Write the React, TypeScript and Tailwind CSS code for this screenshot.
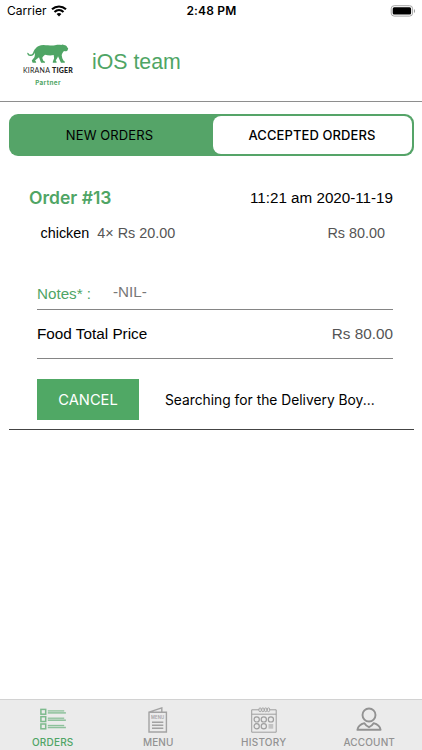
import React, { useState } from 'react';

type IconProps = { className?: string };

const OrdersIcon = ({ className }: IconProps) => (
  <svg viewBox="0 0 26 23" className={className} fill="none" stroke="currentColor">
    {[0, 7.3, 14.6].map((y) => (
      <g key={y} transform={`translate(0 ${y})`}>
        <rect x="0.9" y="1.4" width="4.8" height="4.8" strokeWidth="1.5" opacity="0.7" />
        <path d="M7.8 2.9H24.2" strokeWidth="1.3" opacity="0.6" />
        <path d="M7.8 4.9H25.9" strokeWidth="1.5" opacity="0.6" />
      </g>
    ))}
  </svg>
);

const MenuIcon = ({ className }: IconProps) => (
  <svg viewBox="0 0 20 26" className={className} fill="none" stroke="currentColor" strokeWidth="1.4">
    <g opacity="0.8">
      <path d="M1 5.2H18.4V25H1ZM1 5.2L13.8 0.9V5.2" />
      <path d="M4 15.3H15.3M4 18.3H15.3M4 21.3H15.3" />
    </g>
    <text x="9.6" y="12.4" textAnchor="middle" fontSize="4.2" fontWeight="600" fill="currentColor" stroke="none" textLength="13" opacity="0.8">
      MENU
    </text>
  </svg>
);

const HistoryIcon = ({ className }: IconProps) => (
  <svg viewBox="0 0 26 26" className={className} fill="none" stroke="currentColor">
    <g opacity="0.85">
      <path d="M0.7 2.8H25.2V25.2H0.7ZM0.7 7.2H25.2" strokeWidth="1" />
      {[8, 10.8, 13.6, 16.4].map((x) => (
        <rect key={x} x={x} y="0.9" width="2.2" height="3.8" rx="1.1" strokeWidth="0.9" fill="#ebebeb" />
      ))}
      {[5.7, 12.8, 19.9].map((x) => (
        <circle key={x} cx={x} cy="12.4" r="2.6" strokeWidth="1.2" />
      ))}
      {[5.7, 12.8].map((x) => (
        <circle key={x} cx={x} cy="19.3" r="2.6" strokeWidth="1.2" />
      ))}
    </g>
    <rect x="17.5" y="17" width="4.7" height="4.7" fill="currentColor" stroke="none" opacity="0.45" />
  </svg>
);

const AccountIcon = ({ className }: IconProps) => (
  <svg viewBox="0 0 26 25" className={className} fill="none" stroke="currentColor" strokeWidth="1.9" strokeLinejoin="round">
    <circle cx="13" cy="8" r="6.5" />
    <path d="M8.4 16.2C4.4 17.2 2 19.5 1.4 22.8H24.6C24 19.5 21.6 17.2 17.6 16.2C16.6 17.8 15 19.3 13 20.2C11 19.3 9.4 17.8 8.4 16.2Z" />
  </svg>
);

const TigerLogo = () => (
  <svg viewBox="0 0 42 20" className="h-5 w-[42px]" fill="#4fa565">
    <path d="M8.6 4.6C10 2 13 .9 16.5 .9C21 1 24 2 28 1.3C31 .6 32.6 .7 34.2 1.1C34.9 .1 36.3 .2 36.9 1C38.8 1.2 40 2 40.2 3.2L41.2 4.6L40.6 6.3C40 7.5 38.6 7.5 37 7.1C35.8 8.4 35 9.7 34.7 11.2L35.3 14.2L36.6 16.8L37.8 17.6V18.8H34L32.6 15.8L31 12.2C30.6 13.9 29.4 15.2 28.7 16.6L29.6 17.8V18.8H25.8V17.8L27.1 14.2L26.7 11.1C23.6 11.9 20.4 11.4 18 10.8C17 12 15.6 12.8 15.3 14L16.3 16.7L18 17.8V18.8H14.1L12.5 14.8L12 13.2L8 16.4L9.1 17.8V18.8H5.6L4.8 16.5L7.4 13.3C8.1 11.3 7.9 9.8 8 8.6C7 11 5.5 12.4 3.2 12C1.5 11.7 .4 10.8 .2 9.2C.7 8.6 1.4 8.7 1.6 9.4C2.8 11.5 5.2 10.7 6.2 8.4C6.9 6.8 7.4 5.6 8.6 4.6Z" />
  </svg>
);

const TABS = [
  { label: 'ORDERS', icon: OrdersIcon, iconClass: 'h-[23px] w-[26px]', textClass: 'tracking-[0.2px]' },
  { label: 'MENU', icon: MenuIcon, iconClass: 'h-[26px] w-5', textClass: 'tracking-[0.15px]' },
  { label: 'HISTORY', icon: HistoryIcon, iconClass: 'h-[26px] w-[26px]', textClass: 'tracking-[0.25px]' },
  { label: 'ACCOUNT', icon: AccountIcon, iconClass: 'h-[25px] w-[26px]', textClass: 'tracking-[0.15px]' },
];

const StatusBar = () => (
  <div className="grid h-[22px] grid-cols-3 items-center pr-[6px] pl-[7px] font-['Inter',sans-serif] text-black">
    <div className="flex items-center gap-[4px]">
      <span className="text-[12px] tracking-[0.05px]">Carrier</span>
      <svg viewBox="0 0 16 12" className="h-3 w-4" fill="none" stroke="black" strokeWidth="2.1">
        <path d="M1 4.3C5 .5 11 .5 15 4.3M3.5 7C6.1 4.5 9.9 4.5 12.5 7" />
        <path d="M5.6 9C7 7.7 9 7.7 10.4 9L8 11.5Z" fill="black" stroke="none" />
      </svg>
    </div>
    <span className="text-center text-[12px] font-semibold tracking-[0.2px]">2:48 PM</span>
    <svg viewBox="0 0 26 12" className="h-3 w-[26px] justify-self-end">
      <rect x="1.2" y="0.7" width="21.4" height="10.4" rx="3" fill="none" stroke="#a5a5a5" />
      <rect x="2.7" y="2.2" width="18.4" height="7.4" rx="1.5" />
      <path d="M24 4V8C25.4 7.4 25.4 4.6 24 4Z" fill="#999" />
    </svg>
  </div>
);

export default function App() {
  const [activeTab, setActiveTab] = useState('ORDERS');
  const [segment, setSegment] = useState('ACCEPTED ORDERS');

  return (
    <div className="flex h-[750px] w-[422px] flex-col overflow-hidden bg-white font-['Liberation_Sans',Arial,sans-serif] text-black">
      <StatusBar />

      {/* Header */}
      <header className="flex h-20 border-b border-[#8e8e8e] pl-[21px]">
        <div className="flex w-[54px] flex-col items-center pt-[22px]">
          <TigerLogo />
          <div className="mt-[2px] font-['Lato',sans-serif] text-[7px] leading-[8px] tracking-[0.24px] whitespace-nowrap text-[#222]">
            KIRANA <b className="font-black">TIGER</b>
          </div>
          <div className="mt-[5px] font-['Inter',sans-serif] text-[6.3px] leading-[8px] font-bold tracking-[0.4px] text-[#4fa565]">Partner</div>
        </div>
        <h1 className="mt-[27px] ml-[17px] text-[21.3px] leading-[26px] text-[#4fa565]">iOS team</h1>
      </header>

      {/* Segmented control */}
      <div className="mx-[8.5px] mt-3 flex h-[42px] rounded-[9px] bg-[#55a468] p-[2px] font-['Inter',sans-serif] text-[13px]">
        <button
          onClick={() => setSegment('NEW ORDERS')}
          className={`w-[202px] rounded-lg pt-[1px] pr-[4px] tracking-[0.1px] ${segment === 'NEW ORDERS' ? 'bg-white font-medium' : ''}`}
        >
          NEW ORDERS
        </button>
        <button
          onClick={() => setSegment('ACCEPTED ORDERS')}
          className={`flex-1 rounded-lg pt-[1px] tracking-[0.1px] ${segment === 'ACCEPTED ORDERS' ? 'bg-white font-medium' : ''}`}
        >
          ACCEPTED ORDERS
        </button>
      </div>

      {/* Order card */}
      <section className="mx-[8.5px] h-[274px] border-b-[1.5px] border-[#444]">
        <div className="flex items-center justify-between px-[20.5px] pt-[30px] leading-6">
          <h2 className="font-['Inter',sans-serif] text-[17.5px] font-semibold text-[#4fa565]">Order #13</h2>
          <span className="text-[15.2px]">11:21 am 2020-11-19</span>
        </div>
        <div className="mt-[13px] flex pr-[28.5px] pl-8 text-[14.4px] leading-5 text-[#555]">
          <span className="text-black">chicken</span>
          <span className="ml-[8px]">4× Rs 20.00</span>
          <span className="ml-auto">Rs 80.00</span>
        </div>
        <div className="mr-[20.5px] ml-[28.5px]">
          <div className="mt-[40px] flex h-[27px] border-b border-[#858585] text-[15.2px] leading-5">
            <span className="w-[76px] pt-[1px] text-[#4fa565]">Notes* :</span>
            <span className="-mt-[1px] text-[#777]">-NIL-</span>
          </div>
          <div className="flex h-[49px] items-center justify-between border-b border-[#858585] text-[15.3px]">
            <span>Food Total Price</span>
            <span className="text-[#555]">Rs 80.00</span>
          </div>
          <div className="mt-[20px] flex items-center font-['Inter',sans-serif]">
            <button className="h-[41px] w-[102px] bg-[#50a865] pt-[1px] text-[14.7px] text-white">CANCEL</button>
            <span className="ml-[26px] pt-[2px] text-[13.8px] whitespace-nowrap">Searching for the Delivery Boy...</span>
          </div>
        </div>
      </section>

      {/* Tab bar */}
      <nav className="mt-auto grid h-[51px] grid-cols-4 border-t border-[#d2d2d2] bg-[#ebebeb] font-['Inter',sans-serif] text-[10px] font-medium">
        {TABS.map(({ label, icon: Icon, iconClass, textClass }) => (
          <button
            key={label}
            onClick={() => setActiveTab(label)}
            className={`flex flex-col items-center ${activeTab === label ? 'text-[#4fa565]' : 'text-[#929292]'}`}
          >
            <span className="flex h-9 items-center pt-[3px]">
              <Icon className={iconClass} />
            </span>
            <span className={`leading-[12px] ${textClass}`}>{label}</span>
          </button>
        ))}
      </nav>
    </div>
  );
}
